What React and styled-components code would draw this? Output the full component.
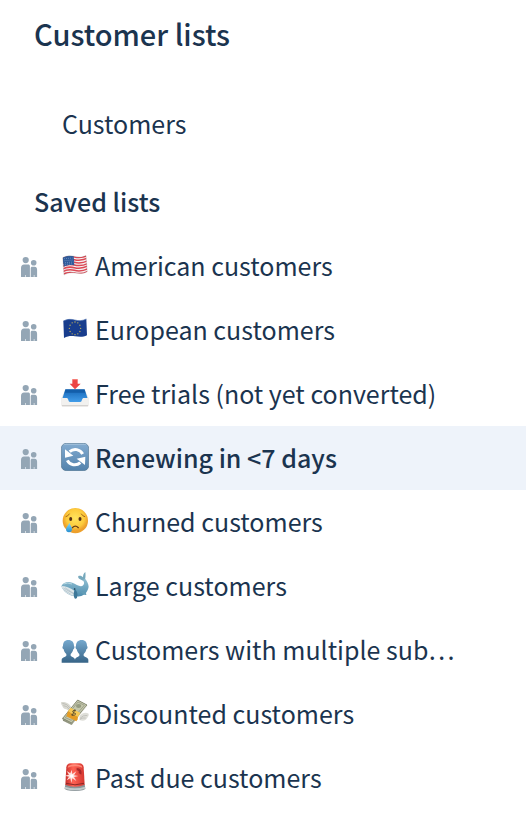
import React, { useState } from 'react';
import styled, { createGlobalStyle } from 'styled-components';

const savedLists = [
	{ id: 'american', title: 'American customers', Emoji: UsFlag },
	{ id: 'european', title: 'European customers', Emoji: EuFlag },
	{ id: 'trials', title: 'Free trials (not yet converted)', Emoji: InboxTray },
	{ id: 'renewing', title: 'Renewing in <7 days', Emoji: Refresh },
	{ id: 'churned', title: 'Churned customers', Emoji: CryingFace },
	{ id: 'large', title: 'Large customers', Emoji: Whale },
	{ id: 'multiple', title: 'Customers with multiple sub…', Emoji: Silhouettes },
	{ id: 'discounted', title: 'Discounted customers', Emoji: FlyingMoney },
	{ id: 'pastdue', title: 'Past due customers', Emoji: Siren },
]

// ------ icons

function People() {
	return (
		<PeopleSvg viewBox="0 0 18 20" aria-hidden="true">
			<circle cx="5.7" cy="3.1" r="3.1" />
			<circle cx="13.7" cy="5.7" r="2.8" />
			<path d="M1 11C1 8.8 2.2 7.4 4 7.4h4.2c1 0 1.7.6 1.7 1.600V20H6v-2h-.6v2H1z" />
			<path d="M10.700 11.4c0-1 .6-1.600 1.600-1.600h2.300c1.600 0 2.500 1.200 2.500 3V20h-2.700v-2h-.6v2h-3.100z" />
		</PeopleSvg>
	);
}

function UsFlag() {
	const stripes = [0, 1, 2, 3, 4, 5, 6];
	return (
		<EmojiSvg viewBox="0 0 84 84" aria-hidden="true">
			<clipPath id="us-shape">
				<path d="M5 20C17 14 28 13 40 16S63 20 75 13L79 62C67 69 54 68 42 66S21 65 9 72z" />
			</clipPath>
			<g clipPath="url(#us-shape)">
				<rect width="84" height="84" fill="#f5f1f1" />
				{stripes.map((i) => (
					<path
						key={i}
						d={`M3 ${23 + i * 8}C17 ${15 + i * 8} 28 ${15 + i * 8} 40 ${18 + i * 8}S65 ${21 + i * 8} 81 ${13 + i * 8}`}
						fill="none"
						stroke="#dc4854"
						strokeWidth="4.5"
					/>
				))}
				<path d="M4 19C16 13 27 13 38 15L40 43C28 41 18 42 8 47z" fill="#2f5b9b" />
				<path d="M10 23l25-2M11 29l25-2M12 35l25-2M13 40l24-2" stroke="#a9bfdf" strokeWidth="2" strokeDasharray="2 4" />
			</g>
			<path d="M5 20C17 14 28 13 40 16S63 20 75 13L79 62C67 69 54 68 42 66S21 65 9 72z" fill="none" stroke="#777" strokeOpacity=".4" strokeWidth="1.5" />
		</EmojiSvg>
	);
}

function EuFlag() {
	const stars = Array.from({ length: 12 }, (_, i) => (i * Math.PI) / 6);
	return (
		<EmojiSvg viewBox="0 0 84 84" aria-hidden="true">
			<path d="M7 18C19 12 29 12 41 15S64 18 76 12L78 61C67 67 54 66 42 64S21 63 9 69z" fill="#183d8d" />
			<path d="M7 18C19 12 29 12 41 15S64 18 76 12" fill="none" stroke="#4669ab" strokeWidth="2" />
			{stars.map((a) => (
				<circle key={a} cx={42 + Math.cos(a) * 17} cy={40 + Math.sin(a) * 19} r="1.9" fill="#d3bd55" />
			))}
		</EmojiSvg>
	);
}

function InboxTray() {
	return (
		<EmojiSvg viewBox="0 0 84 84" aria-hidden="true">
			<linearGradient id="tray-blue" x2="0" y2="1">
				<stop offset="0" stopColor="#1566b7" />
				<stop offset="1" stopColor="#45a1ed" />
			</linearGradient>
			<path d="M13 31h58l12 27v20q0 5-5 5H6q-5 0-5-5V58z" fill="#e9e8e5" />
			<path d="M13 31h58l9 28-12 1-7 12H23l-7-12-12-1z" fill="url(#tray-blue)" />
			<path d="M14 32h56l3 9H11z" fill="#135eaa" />
			<path d="M2 57h16c4 0 4 12 9 12h31c5 0 5-12 9-12h15v22q0 4-5 4H6q-4 0-4-4z" fill="#f2f1ef" />
			<path d="M3 80h78" stroke="#cfcdca" strokeWidth="3" />
			<path d="M34 1h16v13h9L42 31 26 14h8z" fill="#ed4545" />
			<path d="M35 2h14" stroke="#f98478" strokeWidth="2" />
		</EmojiSvg>
	);
}

function Refresh() {
	return (
		<EmojiSvg viewBox="0 0 84 84" aria-hidden="true">
			<linearGradient id="refresh-bg" x2="0" y2="1">
				<stop offset="0" stopColor="#83abd0" />
				<stop offset="1" stopColor="#5382ac" />
			</linearGradient>
			<rect x="1" y="1" width="82" height="82" rx="15" fill="url(#refresh-bg)" stroke="#587891" strokeWidth="2" />
			<path d="M8 4h68" stroke="#b2cce2" strokeWidth="2" />
			<path d="M65 33A25 25 0 0 0 26 26" fill="none" stroke="#fff" strokeWidth="9" />
			<path d="M12 19l0 25 25-6z" fill="#fff" />
			<path d="M19 52a25 25 0 0 0 39 7" fill="none" stroke="#fff" strokeWidth="9" />
			<path d="M72 66l1-25-26 6z" fill="#fff" />
		</EmojiSvg>
	);
}

function CryingFace() {
	return (
		<EmojiSvg viewBox="0 0 84 84" aria-hidden="true">
			<radialGradient id="face" cy=".4">
				<stop offset="0" stopColor="#ffe45e" />
				<stop offset=".7" stopColor="#fdcb3c" />
				<stop offset="1" stopColor="#eda02c" />
			</radialGradient>
			<linearGradient id="tear" x2="0" y2="1">
				<stop offset="0" stopColor="#8bdcf7" />
				<stop offset="1" stopColor="#258ed0" />
			</linearGradient>
			<circle cx="43" cy="41" r="38" fill="url(#face)" />
			<path d="M15 29q6-1 10-8M61 21q4 7 10 8" fill="none" stroke="#a3651c" strokeWidth="3" strokeLinecap="round" />
			<ellipse cx="29" cy="36" rx="4.5" ry="6" fill="#553017" />
			<ellipse cx="57" cy="36" rx="4.5" ry="6" fill="#553017" />
			<path d="M34 62q9-9 18 0" fill="none" stroke="#6b3b16" strokeWidth="4" strokeLinecap="round" />
			<path d="M25 47c3 9 8 12 8 20a9 9 0 0 1-18 0c0-8 7-11 10-20z" fill="url(#tear)" />
		</EmojiSvg>
	);
}

function Whale() {
	return (
		<EmojiSvg viewBox="0 0 84 84" aria-hidden="true">
			<linearGradient id="whale" x2="0" y2="1">
				<stop offset="0" stopColor="#91bfd2" />
				<stop offset="1" stopColor="#4d8daf" />
			</linearGradient>
			<path d="M68 30C60 26 49 23 52 15c6-2 11 0 14 4 0-7 2-13 7-16 1 10 1 15-1 23z" fill="#77a9bd" />
			<path d="M65 27l8-3c7 10 13 20 8 31-6 17-22 25-39 20C24 76 5 59 1 46c6-13 20-15 33-11 13 5 25 16 33 7 4-5 2-11-2-15z" fill="url(#whale)" />
			<path d="M1 45c12 0 27 5 39 14 5 5 7 10 6 16C27 77 6 61 1 45z" fill="#dce6e9" />
			<path d="M7 51l30 17M12 50l30 20M8 56l23 15" stroke="#91a7b3" strokeWidth="1.3" />
			<path d="M42 55c5 5 10 13 6 25-3 5-7 4-8 0-3-7-3-15 2-25z" fill="#3d7798" />
			<path d="M65 61c7 1 11 5 11 11-7 1-12-4-16-9z" fill="#639db7" />
			<circle cx="41" cy="54" r="2.4" fill="#142d3e" />
			<path d="M8 39q12-6 25 0" fill="none" stroke="#b8d8e2" strokeWidth="3" />
		</EmojiSvg>
	);
}

function Silhouettes() {
	const person = 'M22 15c11 0 17 7 17 18 3 2 1 9-2 10-2 8-5 11-8 14v5c3 4 12 4 13 12v9H2v-9c1-8 12-8 14-12v-5c-4-3-7-7-8-14-4-1-5-8-2-10 0-11 5-18 16-18z';
	return (
		<EmojiSvg viewBox="0 0 84 84" aria-hidden="true">
			<linearGradient id="people-blue" x2="0" y2="1">
				<stop offset="0" stopColor="#76a9ce" />
				<stop offset="1" stopColor="#376487" />
			</linearGradient>
			<g fill="url(#people-blue)">
				<path d={person} />
				<path d={person} transform="translate(84) scale(-1 1)" />
			</g>
		</EmojiSvg>
	);
}

function FlyingMoney() {
	return (
		<EmojiSvg viewBox="0 0 84 84" aria-hidden="true">
			<path d="M31 24C25 12 8 6 0 10c0 10 5 10 5 14 3 5 7 6 11 7l9 5z" fill="#d9d9d2" />
			<path d="M4 13q13 0 23 14M7 20q10 0 17 10" fill="none" stroke="#a2a29b" strokeWidth="1.5" />
			<path d="M56 50c8-10 20-11 27-6 1 9-3 9-5 14-4 8-13 9-23 5z" fill="#dfdfd9" />
			<path d="M79 49q-13-1-22 9M74 57q-9-2-17 4" fill="none" stroke="#a7a7a0" strokeWidth="1.5" />
			<path d="M5 58L50 3l28 15-46 60-26-13z" fill="#6f735c" />
			<path d="M5 58L50 3l28 15-46 54z" fill="#c4c7ac" stroke="#73775f" strokeWidth="2" />
			<path d="M13 56L51 9l19 10-39 45z" fill="none" stroke="#8c917a" strokeWidth="2" />
			<ellipse cx="53" cy="21" rx="8" ry="6" fill="#969c81" />
			<path d="M6 61l26 13 46-54M7 65l25 12 45-54" fill="none" stroke="#e6e7d8" strokeWidth="1" />
			<path d="M21 36l30 17-1 8-4 6-30-15z" fill="#e59c24" />
			<path d="M21 36l8-10 29 16-7 12z" fill="#f6c955" />
			<path d="M45 36c-5-5-13 0-9 4s9 1 7 6-10 3-12-1M42 31L33 51" fill="none" stroke="#60512f" strokeWidth="3" />
		</EmojiSvg>
	);
}

function Siren() {
	return (
		<EmojiSvg viewBox="0 0 84 84" aria-hidden="true">
			<linearGradient id="siren-red">
				<stop offset="0" stopColor="#c72e2b" />
				<stop offset=".4" stopColor="#ff6253" />
				<stop offset="1" stopColor="#d43630" />
			</linearGradient>
			<path d="M13 64h58l2 12q-1 8-31 8T11 76z" fill="#8a9498" />
			<path d="M12 71q30 9 60 0v6q-30 10-60 0z" fill="#c1c9ca" />
			<path d="M13 65L16 13Q17 2 29 1h26q12 1 13 12l3 52q-29 12-58 0z" fill="url(#siren-red)" />
			<path d="M22 8q20-9 40 0l2 6q-22-8-44 0z" fill="#ff8b79" />
			<path d="M15 61q27 9 54 0" fill="none" stroke="#8c2827" strokeWidth="3" />
			<path d="M47 15c12 0 17 9 14 20l-8-5c2-5-1-8-6-8z" fill="#a92729" />
			<path d="M32 20l2 13 12-8-7 12 13 2-13 3 7 12-12-8-3 14-3-14-11 6 7-11-12-3 12-3-7-11 11 7z" fill="#ffe2dd" />
			<circle cx="32" cy="39" r="5" fill="#fff" />
		</EmojiSvg>
	);
}

function App() {

	const [ selected, setSelected ] = useState('renewing');

	const onSelect = (e, id) => {
		e.preventDefault()
		setSelected(id)
	}

	return (
	<Sidebar>
		<GlobalStyle />
		<Title>Customer lists</Title>
		<nav>
			<AllLink href="#customers">Customers</AllLink>
			<Subtitle>Saved lists</Subtitle>
			<Lists>
				{savedLists.map(({ id, title, Emoji }) => (
					<li key={id}>
						<ListLink
							href={`#${id}`}
							$active={selected === id}
							aria-current={selected === id ? 'page' : undefined}
							onClick={(e) => onSelect(e, id)}
						>
							<People />
							<Emoji />
							<Name>{title}</Name>
						</ListLink>
					</li>
				))}
			</Lists>
		</nav>
	</Sidebar>);
};

const GlobalStyle = createGlobalStyle`
	body {
		margin: 0;
		background: #fff;
	}
`;

const Sidebar = styled.aside`
	padding-bottom: 4px;
	color: #1b344f;
	font-family: "Noto Sans CJK SC", "Noto Sans", sans-serif;
	font-size: 25px;
	line-height: 32px;
`;

const Title = styled.h1`
	margin: 0;
	padding: 13px 34px 39px;
	font-size: 29px;
	font-weight: 500;
	line-height: 40px;
`;

const AllLink = styled.a`
	display: block;
	padding: 15px 62px 17px;
	color: inherit;
	text-decoration: none;
`;

const Subtitle = styled.h2`
	margin: 0;
	padding: 29px 34px 17px;
	font-size: 25px;
	font-weight: 500;
	line-height: 32px;
`;

const Lists = styled.ul`
	margin: 0;
	padding: 0;
	list-style: none;
`;

const ListLink = styled.a`
	display: flex;
	align-items: center;
	height: 64px;
	padding: 0 20px;
	color: inherit;
	background: ${({ $active }) => ($active ? '#eef3fa' : 'transparent')};
	font-weight: ${({ $active }) => ($active ? 500 : 400)};
	text-decoration: none;
`;

const PeopleSvg = styled.svg`
	flex: none;
	width: 18px;
	height: 20px;
	margin-top: 2px;
	margin-right: 23px;
	fill: #94a6b5;
`;

const EmojiSvg = styled.svg`
	flex: none;
	width: 28px;
	height: 28px;
	margin-bottom: 2px;
	margin-right: 6px;
`;

const Name = styled.span`
	padding-bottom: 2px;
	line-height: 40px;
	white-space: nowrap;
`;

export default App;
